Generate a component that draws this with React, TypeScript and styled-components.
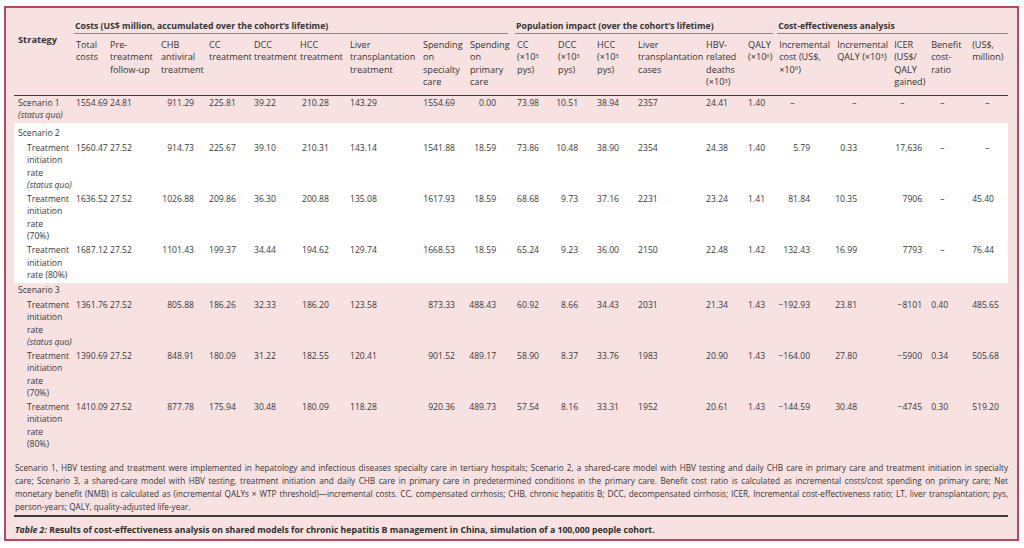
import React from "react";
import styled, { createGlobalStyle } from "styled-components";

const GlobalStyle = createGlobalStyle`
  html, body { margin: 0; padding: 0; background: #ffffff; }
  body { font-family: "Open Sans", "Noto Sans", sans-serif; color: #3a3a3a; }
`;

const Frame = styled.div`
  box-sizing: border-box;
  margin: 6px 0 0 4px;
  width: 1015px;
  height: 535px;
  border: 2px solid #b9475f;
  background: #f7e1e1;
  padding: 0 9px 0 8px;
  display: flex;
  flex-direction: column;
`;

const Table = styled.table`
  width: 994px;
  table-layout: fixed;
  border-collapse: collapse;
  border-spacing: 0;
`;

const GroupHead = styled.th`
  padding: 12px 0 0 0;
  text-align: left;
  vertical-align: top;
  font-weight: 700;
  font-size: 8.7px;
  line-height: 12.5px;
  color: #333;
  white-space: nowrap;
`;

const GroupRule = styled.div<{ $gap: number }>`
  margin-right: ${(p) => p.$gap}px;
  padding-left: 1px;
  border-bottom: 1px solid #8d8585;
  padding-bottom: 0.5px;
`;

const StrategyHead = styled.th`
  padding: 26px 0 0 4px;
  text-align: left;
  vertical-align: top;
  font-weight: 700;
  font-size: 9.3px;
  line-height: 12.5px;
  color: #333;
  border-bottom: 1.5px solid #3b3b3b;
`;

const SubHead = styled.th`
  padding: 5px 0 6px 2px;
  text-align: left;
  vertical-align: top;
  font-weight: 400;
  font-size: 9.1px;
  line-height: 12.4px;
  color: #333;
  white-space: nowrap;
  border-bottom: 1.5px solid #3b3b3b;
`;

const Sup = styled.sup`
  font-size: 6px;
  line-height: 0;
  vertical-align: 0;
  position: relative;
  top: -0.45em;
`;

const Section = styled.tbody<{ $white?: boolean }>`
  background: ${(p) => (p.$white ? "#ffffff" : "transparent")};
`;

const Cell = styled.td<{ $align: string; $pl: number; $pr: number; $pt: number }>`
  padding: ${(p) => p.$pt}px ${(p) => p.$pr}px 1.5px ${(p) => p.$pl}px;
  text-align: ${(p) => p.$align};
  vertical-align: top;
  font-size: 8.6px;
  line-height: 12.4px;
  color: #383838;
  white-space: nowrap;
`;

const LabelCell = styled.td<{ $indent: number; $pt: number }>`
  padding: ${(p) => p.$pt}px 0 1.5px ${(p) => p.$indent}px;
  text-align: left;
  vertical-align: top;
  font-size: 8.6px;
  line-height: 12.4px;
  color: #383838;
  white-space: nowrap;
`;

const SectionLabel = styled.td<{ $pt: number }>`
  padding: ${(p) => p.$pt}px 0 2.5px 4px;
  text-align: left;
  font-size: 8.6px;
  line-height: 12.4px;
  color: #383838;
`;

const Note = styled.span`
  font-style: italic;
`;

const Footnote = styled.div`
  margin-top: 9px;
  padding: 0 0 0 1px;
  font-size: 8.2px;
  line-height: 13px;
  color: #363636;
`;

const FootLine = styled.div<{ $last?: boolean }>`
  text-align: justify;
  text-align-last: ${(p) => (p.$last ? "left" : "justify")};
  white-space: nowrap;
`;

const Rule = styled.div`
  margin-top: 2px;
  height: 2px;
  background: #3c3c3c;
`;

const Caption = styled.div`
  padding: 7px 0 0 1px;
  font-size: 8.7px;
  line-height: 12.5px;
  font-weight: 700;
  color: #2e2e2e;
  i { font-style: italic; }
`;

type Col = { w: number; a: "left" | "right"; pl: number; pr: number; dash?: number };

const cols: Col[] = [
  { w: 34, a: "left", pl: 2, pr: 0 },
  { w: 51, a: "left", pl: 2, pr: 0 },
  { w: 48, a: "right", pl: 0, pr: 13 },
  { w: 45, a: "left", pl: 2, pr: 0 },
  { w: 46, a: "left", pl: 2, pr: 0 },
  { w: 50, a: "left", pl: 4, pr: 0 },
  { w: 73, a: "left", pl: 2, pr: 0 },
  { w: 47, a: "right", pl: 0, pr: 13 },
  { w: 47, a: "right", pl: 0, pr: 19 },
  { w: 41, a: "left", pl: 2, pr: 0 },
  { w: 39, a: "right", pl: 0, pr: 17 },
  { w: 41, a: "left", pl: 2, pr: 0 },
  { w: 68, a: "left", pl: 2, pr: 0 },
  { w: 42, a: "left", pl: 2, pr: 0 },
  { w: 31, a: "left", pl: 2, pr: 0 },
  { w: 58, a: "right", pl: 0, pr: 25, dash: 13 },
  { w: 57, a: "right", pl: 0, pr: 35, dash: 17 },
  { w: 37, a: "right", pl: 0, pr: 7, dash: 8 },
  { w: 41, a: "left", pl: 2, pr: 0, dash: 11 },
  { w: 38, a: "left", pl: 2, pr: 0, dash: 15 },
];

const X3 = <>(×10<Sup>3</Sup></>;

const subHeads: React.ReactNode[][] = [
  ["Total", "costs"],
  ["Pre-", "treatment", "follow-up"],
  ["CHB", "antiviral", "treatment"],
  ["CC", "treatment"],
  ["DCC", "treatment"],
  ["HCC", "treatment"],
  ["Liver", "transplantation", "treatment"],
  ["Spending", "on", "specialty", "care"],
  ["Spending", "on", "primary", "care"],
  ["CC", X3, "pys)"],
  ["DCC", X3, "pys)"],
  ["HCC", X3, "pys)"],
  ["Liver", "transplantation", "cases"],
  ["HBV-", "related", "deaths", <>{X3})</>],
  ["QALY", <>(×10<Sup>6</Sup>)</>],
  ["Incremental", "cost (US$,", <>×10<Sup>6</Sup>)</>],
  ["Incremental", <>QALY (×10<Sup>3</Sup>)</>],
  ["ICER", "(US$/", "QALY", "gained)"],
  ["Benefit", "cost-", "ratio"],
  ["(US$,", "million)"],
];

type Row = { label: React.ReactNode[]; indent: number; values: string[] };

const treat = (last: React.ReactNode[]): React.ReactNode[] => ["Treatment", "initiation", ...last];

const scenario1: Row = {
  label: ["Scenario 1", <Note>(status quo)</Note>],
  indent: 4,
  values: ["1554.69", "24.81", "911.29", "225.81", "39.22", "210.28", "143.29", "1554.69", "0.00", "73.98", "10.51", "38.94", "2357", "24.41", "1.40", "–", "–", "–", "–", "–"],
};

const scenario2: Row[] = [
  {
    label: treat(["rate", <Note>(status quo)</Note>]),
    indent: 13,
    values: ["1560.47", "27.52", "914.73", "225.67", "39.10", "210.31", "143.14", "1541.88", "18.59", "73.86", "10.48", "38.90", "2354", "24.38", "1.40", "5.79", "0.33", "17,636", "–", "–"],
  },
  {
    label: treat(["rate", "(70%)"]),
    indent: 13,
    values: ["1636.52", "27.52", "1026.88", "209.86", "36.30", "200.88", "135.08", "1617.93", "18.59", "68.68", "9.73", "37.16", "2231", "23.24", "1.41", "81.84", "10.35", "7906", "–", "45.40"],
  },
  {
    label: treat(["rate (80%)"]),
    indent: 13,
    values: ["1687.12", "27.52", "1101.43", "199.37", "34.44", "194.62", "129.74", "1668.53", "18.59", "65.24", "9.23", "36.00", "2150", "22.48", "1.42", "132.43", "16.99", "7793", "–", "76.44"],
  },
];

const scenario3: Row[] = [
  {
    label: treat(["rate", <Note>(status quo)</Note>]),
    indent: 13,
    values: ["1361.76", "27.52", "805.88", "186.26", "32.33", "186.20", "123.58", "873.33", "488.43", "60.92", "8.66", "34.43", "2031", "21.34", "1.43", "−192.93", "23.81", "−8101", "0.40", "485.65"],
  },
  {
    label: treat(["rate", "(70%)"]),
    indent: 13,
    values: ["1390.69", "27.52", "848.91", "180.09", "31.22", "182.55", "120.41", "901.52", "489.17", "58.90", "8.37", "33.76", "1983", "20.90", "1.43", "−164.00", "27.80", "−5900", "0.34", "505.68"],
  },
  {
    label: treat(["rate", "(80%)"]),
    indent: 13,
    values: ["1410.09", "27.52", "877.78", "175.94", "30.48", "180.09", "118.28", "920.36", "489.73", "57.54", "8.16", "33.31", "1952", "20.61", "1.43", "−144.59", "30.48", "−4745", "0.30", "519.20"],
  },
];

const lines = (items: React.ReactNode[]) =>
  items.map((t, i) => (
    <React.Fragment key={i}>
      {i > 0 && <br />}
      {t}
    </React.Fragment>
  ));

const DataRow: React.FC<{ row: Row; pt?: number }> = ({ row, pt = 0 }) => (
  <tr>
    <LabelCell $indent={row.indent} $pt={pt}>
      {lines(row.label)}
    </LabelCell>
    {row.values.map((v, i) => {
      const c = cols[i];
      const isDash = v === "–" && c.dash !== undefined;
      return (
        <Cell
          key={i}
          $pt={pt}
          $align={isDash ? "left" : c.a}
          $pl={isDash ? (c.dash as number) : c.pl}
          $pr={isDash ? 0 : c.pr}
        >
          {v}
        </Cell>
      );
    })}
  </tr>
);

const footLines = [
  "Scenario 1, HBV testing and treatment were implemented in hepatology and infectious diseases specialty care in tertiary hospitals; Scenario 2, a shared-care model with HBV testing and daily CHB care in primary care and treatment initiation in specialty",
  "care; Scenario 3, a shared-care model with HBV testing, treatment initiation and daily CHB care in primary care in predetermined conditions in the primary care. Benefit cost ratio is calculated as incremental costs/cost spending on primary care; Net",
  "monetary benefit (NMB) is calculated as (incremental QALYs × WTP threshold)—incremental costs. CC, compensated cirrhosis; CHB, chronic hepatitis B; DCC, decompensated cirrhosis; ICER, Incremental cost-effectiveness ratio; LT, liver transplantation; pys,",
  "person-years; QALY, quality-adjusted life-year.",
];

export default function App() {
  return (
    <>
      <GlobalStyle />
      <Frame>
        <Table>
          <colgroup>
            <col style={{ width: 60 }} />
            {cols.map((c, i) => (
              <col key={i} style={{ width: c.w }} />
            ))}
          </colgroup>
          <thead>
            <tr>
              <StrategyHead rowSpan={2}>Strategy</StrategyHead>
              <GroupHead colSpan={9}>
                <GroupRule $gap={7}>Costs (US$ million, accumulated over the cohort’s lifetime)</GroupRule>
              </GroupHead>
              <GroupHead colSpan={6}>
                <GroupRule $gap={4}>Population impact (over the cohort’s lifetime)</GroupRule>
              </GroupHead>
              <GroupHead colSpan={5}>
                <GroupRule $gap={0}>Cost-effectiveness analysis</GroupRule>
              </GroupHead>
            </tr>
            <tr>
              {subHeads.map((h, i) => (
                <SubHead key={i}>{lines(h)}</SubHead>
              ))}
            </tr>
          </thead>
          <Section>
            <DataRow row={scenario1} pt={1} />
          </Section>
          <Section $white>
            <tr>
              <SectionLabel $pt={4} colSpan={21}>Scenario 2</SectionLabel>
            </tr>
            {scenario2.map((r, i) => (
              <DataRow key={i} row={r} />
            ))}
          </Section>
          <Section>
            <tr>
              <SectionLabel $pt={1} colSpan={21}>Scenario 3</SectionLabel>
            </tr>
            {scenario3.map((r, i) => (
              <DataRow key={i} row={r} />
            ))}
          </Section>
        </Table>
        <Footnote>
          {footLines.map((l, i) => (
            <FootLine key={i} $last={i === footLines.length - 1}>
              {l}
            </FootLine>
          ))}
        </Footnote>
        <Rule />
        <Caption>
          <i>Table 2:</i> Results of cost-effectiveness analysis on shared models for chronic hepatitis B management in China, simulation of a 100,000 people cohort.
        </Caption>
      </Frame>
    </>
  );
}
